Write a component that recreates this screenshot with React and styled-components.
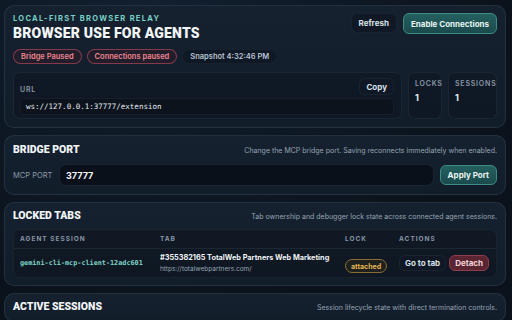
import React from "react";
import styled, { createGlobalStyle } from "styled-components";

const GlobalStyle = createGlobalStyle`
  html, body {
    margin: 0;
    padding: 0;
    background: #0b121b;
    font-family: Inter, "Noto Sans", sans-serif;
    color: #dfe6ee;
  }
  * { box-sizing: border-box; }
`;

const Page = styled.div`
  width: 512px;
  height: 320px;
  overflow: hidden;
  padding: 5px 6px 0 4px;
  display: flex;
  flex-direction: column;
  gap: 7px;
  background: radial-gradient(ellipse at 30% 0%, #122030 0%, #0b121b 70%);
`;

const Panel = styled.section`
  background: linear-gradient(180deg, #15212f 0%, #121d2a 100%);
  border: 1px solid rgba(150, 180, 210, 0.12);
  border-radius: 10px;
  padding: ${p => p.$pad || "8px 8px 8px 8px"};
  flex-shrink: 0;
`;

const HeaderRow = styled.div`
  display: flex;
  justify-content: space-between;
  align-items: flex-start;
`;

const Kicker = styled.div`
  font-size: 7.5px;
  font-weight: 700;
  letter-spacing: 1.3px;
  color: #79cfc6;
  margin-top: 8px;
`;

const Title = styled.h1`
  margin: 2px 0 0;
  font-family: Roboto, "Liberation Sans", sans-serif;
  font-weight: 900;
  font-size: 14px;
  letter-spacing: 0.2px;
  color: #f2f5f8;
  line-height: 17px;
`;

const Pills = styled.div`
  display: flex;
  gap: 5px;
  margin-top: 7px;
`;

const Pill = styled.span`
  height: 15px;
  padding: 0 7px;
  border-radius: 8px;
  display: inline-flex;
  align-items: center;
  font-size: 7.5px;
  font-weight: 600;
  color: ${p => (p.$tone === "bad" ? "#ef8592" : "#b9c4d1")};
  border: 1px solid ${p => (p.$tone === "bad" ? "rgba(214, 84, 104, 0.55)" : "rgba(150, 180, 210, 0.06)")};
  background: ${p => (p.$tone === "bad" ? "rgba(70, 24, 36, 0.25)" : "#0f1825")};
`;

const Buttons = styled.div`
  display: flex;
  gap: 6px;
  margin-top: 7px;
`;

const Button = styled.button`
  font-family: Inter, sans-serif;
  font-size: 8px;
  font-weight: 700;
  height: ${p => p.$h || 20}px;
  padding: 0 ${p => p.$px || 7}px;
  border-radius: 6px;
  cursor: pointer;
  white-space: nowrap;
  color: ${p => (p.$variant === "teal" ? "#e8f4f3" : p.$variant === "danger" ? "#f3d4da" : "#d9e1ea")};
  background: ${p =>
    p.$variant === "teal"
      ? "linear-gradient(180deg, #24605f 0%, #1b4a4c 100%)"
      : p.$variant === "danger"
      ? "#5a2431"
      : "#0f1824"};
  border: 1px solid
    ${p =>
      p.$variant === "teal"
        ? "#3d8b87"
        : p.$variant === "danger"
        ? "#8e3d4e"
        : "rgba(150, 180, 210, 0.08)"};
`;

const StatsRow = styled.div`
  display: flex;
  gap: 6px;
  margin-top: 8px;
`;

const Box = styled.div`
  background: rgba(9, 15, 23, 0.35);
  border: 1px solid rgba(150, 180, 210, 0.09);
  border-radius: 7px;
  height: 47px;
  width: ${p => (p.$w ? `${p.$w}px` : "auto")};
  flex: ${p => (p.$w ? "none" : 1)};
  padding: ${p => p.$pad || "6px 6px"};
`;

const UrlTop = styled.div`
  display: flex;
  justify-content: space-between;
  align-items: center;
`;

const Label = styled.div`
  font-size: 7px;
  font-weight: 600;
  letter-spacing: 0.8px;
  color: #8b98a8;
  margin-top: ${p => p.$mt || 0}px;
`;

const UrlField = styled.div`
  margin-top: 3px;
  height: 17px;
  background: #0c131d;
  border: 1px solid rgba(150, 180, 210, 0.08);
  border-radius: 5px;
  padding: 0 5px;
  display: flex;
  align-items: center;
  font-family: "DejaVu Sans Mono", "Liberation Mono", monospace;
  font-size: 7.5px;
  color: #e6ebf1;
`;

const StatValue = styled.div`
  font-size: 9px;
  font-weight: 700;
  color: #e9eef4;
  margin-top: 4px;
`;

const SectionHead = styled.div`
  display: flex;
  justify-content: space-between;
  align-items: center;
  height: 12px;
`;

const SectionTitle = styled.h2`
  margin: 0;
  font-family: Roboto, "Liberation Sans", sans-serif;
  font-weight: 900;
  font-size: 10.5px;
  line-height: 12px;
  color: #f2f5f8;
`;

const Desc = styled.div`
  font-size: 7px;
  color: #96a3b2;
`;

const PortRow = styled.div`
  display: flex;
  align-items: center;
  gap: 6px;
  margin-top: 8px;
`;

const PortLabel = styled.span`
  font-size: 7.5px;
  color: #8b98a8;
  width: 40px;
`;

const PortInput = styled.div`
  flex: 1;
  height: 22px;
  background: #0a1019;
  border: 1px solid rgba(150, 180, 210, 0.12);
  border-radius: 7px;
  padding: 0 6px;
  display: flex;
  align-items: center;
  font-size: 9px;
  font-weight: 700;
  color: #f4f6f9;
`;

const Table = styled.div`
  margin-top: 7px;
  background: rgba(9, 15, 23, 0.4);
  border: 1px solid rgba(150, 180, 210, 0.08);
  border-radius: 7px;
`;

const Row = styled.div`
  display: grid;
  grid-template-columns: 140px 185px 54px 1fr;
  align-items: center;
  padding: 0 6px;
  height: ${p => p.$h}px;
  border-bottom: ${p => (p.$head ? "1px solid rgba(150, 180, 210, 0.1)" : "none")};
`;

const Th = styled.div`
  font-size: 6.5px;
  font-weight: 700;
  letter-spacing: 1px;
  color: #8795a7;
`;

const Mono = styled.div`
  font-family: "DejaVu Sans Mono", "Liberation Mono", monospace;
  font-size: 6.8px;
  font-weight: 700;
  color: #7fd3c8;
`;

const TabTitle = styled.div`
  font-size: 7.3px;
  font-weight: 700;
  color: #eef2f6;
  white-space: nowrap;
`;

const TabUrl = styled.div`
  font-size: 6.5px;
  color: #98a5b4;
  margin-top: 3px;
`;

const LockPill = styled.span`
  display: inline-flex;
  align-items: center;
  height: 14px;
  padding: 0 5px;
  border-radius: 7px;
  border: 1px solid #8a6d34;
  background: rgba(80, 60, 20, 0.25);
  color: #e5b654;
  font-size: 7px;
  font-weight: 700;
`;

const Actions = styled.div`
  display: flex;
  gap: 3px;
`;

export default function App() {
  return (
    <>
      <GlobalStyle />
      <Page>
        <Panel $pad="0 8px 8px 8px">
          <HeaderRow>
            <div>
              <Kicker>LOCAL-FIRST BROWSER RELAY</Kicker>
              <Title>BROWSER USE FOR AGENTS</Title>
              <Pills>
                <Pill $tone="bad">Bridge Paused</Pill>
                <Pill $tone="bad">Connections paused</Pill>
                <Pill>Snapshot 4:32:46 PM</Pill>
              </Pills>
            </div>
            <Buttons>
              <Button>Refresh</Button>
              <Button $variant="teal" $h={21}>Enable Connections</Button>
            </Buttons>
          </HeaderRow>
          <StatsRow>
            <Box $pad="5px 7px 0 6px">
              <UrlTop>
                <Label $mt={5}>URL</Label>
                <Button $h={17} $px={6}>Copy</Button>
              </UrlTop>
              <UrlField>ws://127.0.0.1:37777/extension</UrlField>
            </Box>
            <Box $w={34}>
              <Label>LOCKS</Label>
              <StatValue>1</StatValue>
            </Box>
            <Box $w={49}>
              <Label>SESSIONS</Label>
              <StatValue>1</StatValue>
            </Box>
          </StatsRow>
        </Panel>

        <Panel $pad="8px 8px 8px 8px">
          <SectionHead>
            <SectionTitle>BRIDGE PORT</SectionTitle>
            <Desc>Change the MCP bridge port. Saving reconnects immediately when enabled.</Desc>
          </SectionHead>
          <PortRow>
            <PortLabel>MCP PORT</PortLabel>
            <PortInput>37777</PortInput>
            <Button $variant="teal" $h={20} $px={7}>Apply Port</Button>
          </PortRow>
        </Panel>

        <Panel $pad="7px 8px 7px 8px">
          <SectionHead>
            <SectionTitle>LOCKED TABS</SectionTitle>
            <Desc>Tab ownership and debugger lock state across connected agent sessions.</Desc>
          </SectionHead>
          <Table>
            <Row $head $h={19}>
              <Th>AGENT SESSION</Th>
              <Th>TAB</Th>
              <Th>LOCK</Th>
              <Th>ACTIONS</Th>
            </Row>
            <Row $h={28}>
              <Mono>gemini-cli-mcp-client-12adc601</Mono>
              <div>
                <TabTitle>#355382165 TotalWeb Partners Web Marketing</TabTitle>
                <TabUrl>https://totalwebpartners.com/</TabUrl>
              </div>
              <div>
                <LockPill>attached</LockPill>
              </div>
              <Actions>
                <Button $h={16} $px={5}>Go to tab</Button>
                <Button $variant="danger" $h={16} $px={5}>Detach</Button>
              </Actions>
            </Row>
          </Table>
        </Panel>

        <Panel $pad="7px 8px 8px 8px">
          <SectionHead>
            <SectionTitle>ACTIVE SESSIONS</SectionTitle>
            <Desc>Session lifecycle state with direct termination controls.</Desc>
          </SectionHead>
        </Panel>
      </Page>
    </>
  );
}
